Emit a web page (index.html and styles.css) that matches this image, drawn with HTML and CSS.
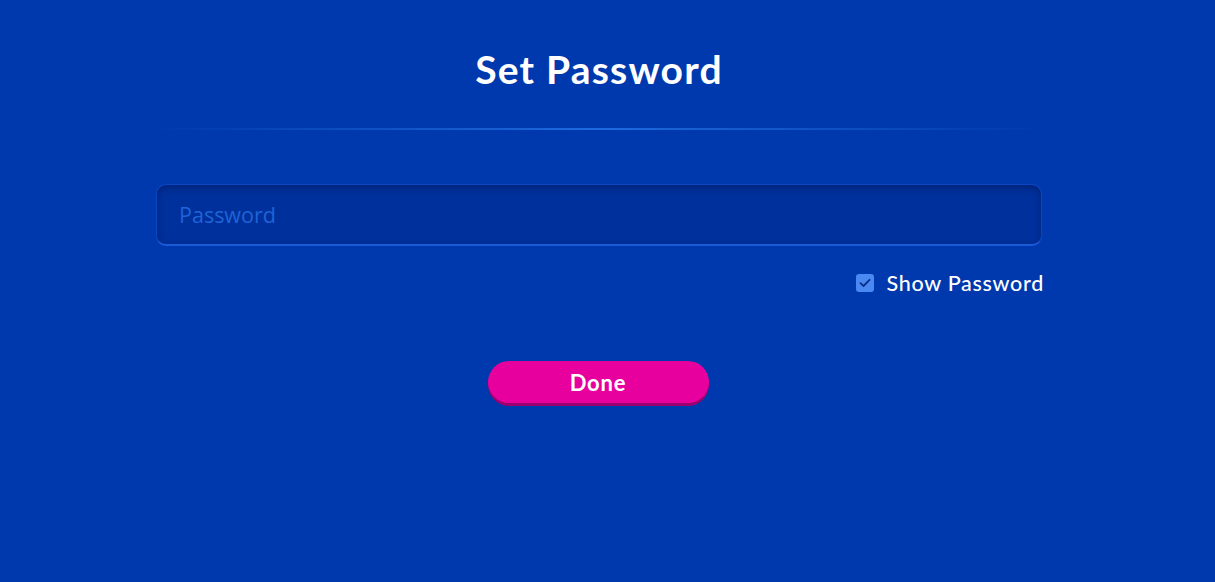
FILE: index.html
```html
<!DOCTYPE html>
<html>
<head>
<meta charset="utf-8">
<link rel="stylesheet" href="styles.css">
</head>
<body>
<div class="panel">
  <h1 class="title">Set Password</h1>
  <div class="divider"></div>
  <div class="field">
    <input class="input" type="text" placeholder="Password">
  </div>
  <label class="show">
    <span class="check">
      <svg width="12" height="10" viewBox="0 0 12 10"><path d="M1.5 5.2 L4.5 8 L10.5 1.8" fill="none" stroke="#0b2f8a" stroke-width="1.8" stroke-linecap="round" stroke-linejoin="round"/></svg>
    </span>
    <span class="show-text">Show Password</span>
  </label>
  <div class="actions">
    <button class="done">Done</button>
  </div>
</div>
</body>
</html>
```
FILE: styles.css
```css
html, body {
  margin: 0;
  padding: 0;
  background: #0039ae;
  height: 100%;
}
body {
  font-family: "Lato", "Noto Sans", sans-serif;
  color: #fff;
}
.panel {
  width: 886px;
  margin-left: 156px;
  padding-top: 44px;
  display: flex;
  flex-direction: column;
}
.title {
  margin: 0;
  text-align: center;
  font-size: 39px;
  font-weight: 700;
  line-height: 50px;
  letter-spacing: 1.2px;
}
.divider {
  margin-top: 34px;
  height: 2px;
  background: linear-gradient(90deg, rgba(30,110,230,0) 0%, #1d6ade 50%, rgba(30,110,230,0) 100%);
}
.field {
  margin-top: 54px;
}
.input {
  display: block;
  box-sizing: border-box;
  width: 886px;
  height: 62px;
  border-radius: 10px;
  border: 1px solid #0a47c4;
  border-bottom: 2px solid #1c5bd8;
  background: #00309b;
  box-shadow: inset 0 3px 6px rgba(0, 20, 80, 0.45);
  padding: 0 22px;
  font-family: "Open Sans", "Noto Sans", sans-serif;
  font-size: 21.5px;
  color: #fff;
  outline: none;
}
.input::placeholder {
  color: #1f63d8;
}
.show {
  margin-top: 25px;
  align-self: flex-end;
  display: flex;
  align-items: center;
  gap: 13px;
  margin-right: -2px;
}
.check {
  width: 18px;
  height: 18px;
  border-radius: 3px;
  background: #4a88f2;
  display: flex;
  align-items: center;
  justify-content: center;
}
.show-text {
  font-size: 21.5px;
  font-weight: 500;
  letter-spacing: 0.7px;
  line-height: 24px;
}
.actions {
  margin-top: 66px;
  display: flex;
  justify-content: center;
  padding-right: 2px;
}
.done {
  width: 221px;
  height: 42px;
  border: none;
  border-radius: 22px;
  background: #e8009f;
  box-shadow: 0 3px 0 #9a0070;
  color: #fff;
  font-family: "Lato", "Noto Sans", sans-serif;
  font-size: 22px;
  font-weight: 700;
  letter-spacing: 0.8px;
  padding: 0;
}
```
